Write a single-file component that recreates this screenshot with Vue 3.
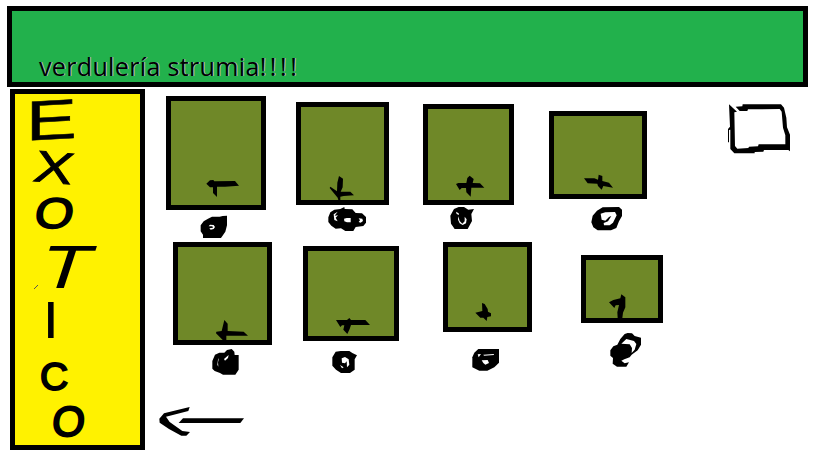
<script setup>
// Sidebar letters: the matrix gives each one its hand-written proportions
const letters = [
  { char: 'E', matrix: 'matrix(.76 -.04 0 .56 11 46.5)', weight: 1 },
  { char: 'X', matrix: 'matrix(.58 .05 -.08 .44 17 87)', weight: 2 },
  { char: 'O', matrix: 'matrix(.5 0 -.06 .43 18 134)', weight: 4 },
  { char: 'T', matrix: 'matrix(.82 0 -.2 .61 20 194)', weight: 0 },
  { char: 'I', matrix: 'matrix(.6 0 0 .52 27.5 244)', weight: 0 },
  { char: 'C', matrix: 'matrix(.39 0 0 .38 25 295.5)', weight: 5 },
  { char: 'O', matrix: 'matrix(.42 0 -.04 .42 36 341.5)', weight: 5 },
]

// Sketches use three units per pixel
const rows = [
  [
    {
      view: '33 18 300 342',
      ink: [
        'M154 281L165 271L175 270L178 274L240 273L252 287L210 290H186V321L174 309V292H165Z',
        'M137 406L146 394L159 386L171 380H194L203 378L216 377V406L211 425L198 444H144V434L137 424Z',
      ],
      gaps: ['M161 409L165 404L176 405L180 411L176 417L167 419L163 415L174 413L172 409Z'],
    },
    {
      view: '18 21 279 309',
      ink: [
        'M147 243L159 251L158 277L152 290H181L192 301L161 303L151 305V315H145L143 308L119 279L121 275L141 289L142 263Z',
        'M115 367L121 352L133 344L151 342L163 336L164 342L187 343L197 354L216 355L228 366V383L220 393L197 396L190 408H166L153 400L137 401L124 392L115 381Z',
      ],
      gaps: ['M131 358L143 350L134 362L144 361L137 368L143 379L133 375Z', 'M162 371L170 369H182V382H171L163 379Z', 'M206 370L217 371L219 378L212 383L206 381L210 376Z'],
    },
    {
      view: '24 27 273 303',
      ink: [
        'M123 267L130 264L154 264L157 249L164 242L176 252L173 264L195 265L208 278H169L167 305L154 292L153 279H140L134 285Z',
        'M106 362L117 342L131 336H147L160 344L177 342L169 357L171 378L158 402H119L108 386Z',
      ],
      gaps: ['M123 350L131 355L132 360L125 357Z', 'M130 364L134 378L142 386L149 379V365L155 373L153 385L143 390L134 385L129 374Z'],
    },
    {
      view: '27 48 294 264',
      ink: [
        'M132 250L163 250L174 254L176 239L187 243L187 258L207 263L219 278L190 273L185 284L174 273L172 266L143 265Z',
        'M154 382L158 362L171 347L188 337L237 336L246 344V363L237 379L229 399L213 406H173L160 397Z',
      ],
      gaps: ['M182 356L196 352L225 351L230 361L219 383L209 391L192 391L191 384L204 379L214 363L207 366L196 377L185 374Z'],
    },
  ],
  [
    {
      view: '24 21 297 309',
      ink: [
        'M178 255L188 266L188 288L236 290L249 302H184V316H174L153 295L154 290L170 288Z',
        'M142 378L150 359L163 353L178 353L186 345L200 342L208 350L209 360L221 360V404L211 419H174L165 414L149 408L142 401Z',
      ],
      gaps: ['M177 372L191 360L189 369L180 377Z', 'M159 374L162 369L159 382L160 395L157 389Z'],
    },
    {
      view: '24 33 288 285',
      ink: [
        'M123 255H156L163 249L168 255H211L225 270H168L164 282L157 297L145 284L148 271H141L136 276Z',
        'M112 367L122 350L137 348H163L172 354L186 361L179 373V404L165 414H138L123 404L112 392Z',
      ],
      gaps: ['M140 370L150 366L161 373L163 389L156 397L155 379L150 385L141 383Z', 'M135 390L146 397L141 400Z'],
    },
    {
      view: '24 21 267 270',
      ink: [
        'M141 204L149 207L158 222L159 230L168 235V244L157 246L155 258L145 248L136 248L121 233L142 228Z',
        'M112 367L118 353L130 342H192V383L178 397L157 407H133L112 397Z',
      ],
      gaps: ['M128 358L138 357L131 367Z', 'M145 359L176 357L177 360L147 362Z', 'M140 376L158 375L162 384L151 389L145 384Z'],
    },
    {
      view: '33 30 246 204',
      ink: [
        'M117 172L130 165L151 160L154 148L166 157V187L159 203L157 219H143L142 202L147 180L137 181L133 189Z',
        'M121 316L130 304L142 299L151 282L164 267L173 264L186 265L194 273L213 278V299L203 316L185 329L179 337L163 343L154 347L164 355L177 352L169 365H141L128 356L129 339L121 332Z',
      ],
      gaps: ['M154 296L169 282L192 288L199 297L194 314L185 324L186 309L179 298Z'],
    },
  ],
]
</script>

<template>
  <div class="page">
    <header class="banner">
      <h1>verdulería strumia<span class="bangs">!!!!</span></h1>
    </header>
    <div class="content">
      <aside class="sidebar">
        <svg class="letters" width="125" height="351" viewBox="0 0 125 351">
          <text v-for="(letter, i) in letters" :key="i" class="letter" :stroke-width="letter.weight" :transform="letter.matrix">{{ letter.char }}</text>
          <path class="tick" d="M19 195L23 191" />
        </svg>
      </aside>
      <main class="shop">
        <div v-for="(row, r) in rows" :key="r" class="row" :class="`row-${r + 1}`">
          <article v-for="(card, c) in row" :key="c" class="card" :class="`card-${r + 1}-${c + 1}`">
            <svg class="sketch" :viewBox="card.view">
              <path v-for="d in card.ink" :key="d" :d="d" />
              <path v-for="d in card.gaps" :key="d" :d="d" class="gap" />
            </svg>
          </article>
        </div>
        <svg class="arrow" width="85" height="30" viewBox="477 408 255 90">
          <path d="M478 446L492 430L569 411L565 423L498 440L509 456L547 483L570 486L559 497H544L507 477L479 458Z" />
          <path d="M536 459L549 445H732L721 459Z" />
        </svg>
      </main>
      <svg class="basket" width="62" height="50" viewBox="84 311 186 150">
        <path fill-rule="evenodd" d="M87 312L111 334L103 336L105 437L112 445L145 443L147 439L174 438L176 432L256 432V405L249 382L245 334L239 326L144 327L142 332H119L107 319L127 318L128 312H243L252 322L259 352L261 381L270 403V453L265 449H192L190 454L164 455V459H103L91 446V388L87 389V426H84V386L90 379Z" />
      </svg>
    </div>
  </div>
</template>

<style>
body {
  margin: 0;
  background: #fff;
}
</style>

<style scoped>
.page {
  box-sizing: border-box;
  width: 819px;
  height: 460px;
  padding: 6px 0 0 7px;
  overflow: hidden;
  font-family: "Open Sans", "Noto Sans", sans-serif;
}
svg {
  display: block;
}
.banner {
  box-sizing: border-box;
  display: flex;
  align-items: flex-end;
  width: 801px;
  height: 81px;
  padding-left: 27px;
  border: 5px solid #000;
  background: #22b14c;
}
h1 {
  margin: 0;
  font-size: 25px;
  font-weight: 400;
  line-height: 32px;
  letter-spacing: 0.35px;
  white-space: nowrap;
  text-shadow: 1px 0 0 #b7bfb9;
}
.bangs {
  letter-spacing: 3.6px;
}
.content {
  display: flex;
  align-items: flex-start;
  padding: 2px 0 0 3px;
}
.sidebar {
  flex: none;
  border: 5px solid #000;
  background: #fff200;
}
.letters {
  overflow: visible;
}
.letter {
  font: 100px "Liberation Sans", sans-serif;
  stroke: #000;
}
.tick {
  fill: none;
  stroke: #555;
}
.shop {
  flex: none;
  width: 585px;
}
.row {
  display: flex;
  align-items: flex-start;
}
.row-1 {
  height: 153px;
}
.row-2 {
  height: 165px;
}
.card {
  box-sizing: border-box;
  flex: none;
  position: relative;
  border: 5px solid #000;
  background: #6f8828;
}
.sketch {
  position: absolute;
  inset: -5px;
  width: calc(100% + 10px);
  height: calc(100% + 10px);
  overflow: visible;
}
.gap {
  fill: #fff;
}
.card-1-1 { width: 100px; height: 114px; margin: 7px 0 0 21px; }
.card-1-2 { width: 93px; height: 103px; margin: 13px 0 0 30px; }
.card-1-3 { width: 91px; height: 101px; margin: 15px 0 0 34px; }
.card-1-4 { width: 98px; height: 88px; margin: 22px 0 0 35px; }
.card-2-1 { width: 99px; height: 103px; margin: 0 0 0 28px; }
.card-2-2 { width: 96px; height: 95px; margin: 4px 0 0 31px; }
.card-2-3 { width: 89px; height: 90px; margin: 0 0 0 44px; }
.card-2-4 { width: 82px; height: 68px; margin: 13px 0 0 49px; }
.arrow {
  margin: -1px 0 0 14px;
}
.basket {
  flex: none;
  margin: 15px 0 0 -2px;
}
</style>
